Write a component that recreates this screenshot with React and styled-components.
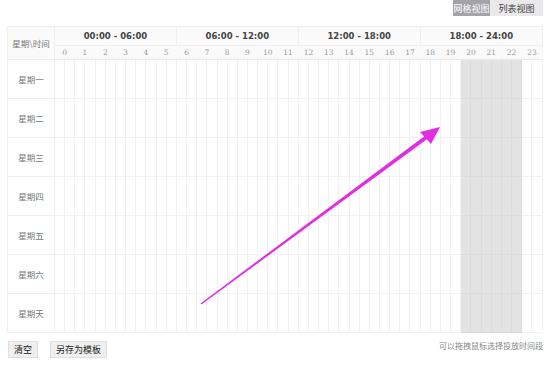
import React from 'react'
import styled, { createGlobalStyle } from 'styled-components'

const GlobalStyle = createGlobalStyle`
  body {
    margin: 0;
    background: #fff;
    font-family: 'Noto Sans CJK SC', 'DejaVu Sans', sans-serif;
  }
`

const Page = styled.div`
  position: relative;
  width: 550px;
  height: 366px;
  padding: 0 7px;
  box-sizing: border-box;
`

const Toolbar = styled.div`
  display: flex;
  justify-content: flex-end;
  height: 16px;
  margin-bottom: 10px;
`

const ViewButton = styled.div`
  display: flex;
  align-items: center;
  justify-content: center;
  width: ${(p) => (p.$active ? '37px' : '53px')};
  height: 16px;
  font-size: 9px;
  background: ${(p) => (p.$active ? '#a3a3a8' : '#e9e9e9')};
  color: ${(p) => (p.$active ? '#fff' : '#444')};
`

const Grid = styled.table`
  width: 536px;
  table-layout: fixed;
  border-collapse: collapse;
  border: 1px solid #ececec;

  td,
  th {
    border: 1px solid #efefef;
    padding: 0;
  }
`

const CornerCell = styled.th`
  width: 47px;
  font-size: 8.5px;
  font-weight: normal;
  color: #777;
  background: #fafafa;
`

const RangeCell = styled.th`
  height: 18px;
  font-family: 'DejaVu Sans', sans-serif;
  font-size: 8.5px;
  font-weight: bold;
  color: #444;
  background: #fafafa;
`

const HourCell = styled.th`
  height: 13px;
  font-family: 'DejaVu Serif', serif;
  font-size: 7.5px;
  font-weight: normal;
  color: #999;
  background: #fafafa;
  border-left-color: ${(p) => (p.$edge ? '#efefef' : '#fafafa')} !important;
  border-right-color: #fafafa !important;
  border-bottom-color: #e8e8e8 !important;
`

const DayCell = styled.td`
  height: 38px;
  font-size: 8.5px;
  color: #777;
  text-align: center;
`

const Slot = styled.td`
  background: ${(p) => (p.$on ? '#e3e3e3' : '#fff')};
  border-color: ${(p) => (p.$on ? '#dcdcdc' : '#f1f1f1')} !important;
`

const Footer = styled.div`
  display: flex;
  align-items: center;
  justify-content: space-between;
  margin-top: 8px;
  padding-left: 1px;
`

const Actions = styled.div`
  display: flex;
  gap: 12px;
`

const Button = styled.div`
  height: 15px;
  padding: 0 5px;
  display: flex;
  align-items: center;
  font-size: 9px;
  color: #222;
  background: #efefef;
  border: 1px solid #e0e0e0;
`

const Hint = styled.div`
  font-size: 8px;
  color: #888;
  margin-top: -8px;
`

const Arrow = styled.svg`
  position: absolute;
  left: 0;
  top: 0;
  pointer-events: none;
`

const ranges = ['00:00 - 06:00', '06:00 - 12:00', '12:00 - 18:00', '18:00 - 24:00']
const days = ['星期一', '星期二', '星期三', '星期四', '星期五', '星期六', '星期天']
const hours = Array.from({ length: 24 }, (_, i) => i)
const slots = Array.from({ length: 48 }, (_, i) => i)

const App = () => {
  return (
    <Page>
      <GlobalStyle />
      <Toolbar>
        <ViewButton $active>网格视图</ViewButton>
        <ViewButton>列表视图</ViewButton>
      </Toolbar>
      <Grid>
        <colgroup>
          <col style={{ width: 47 }} />
          {slots.map((s) => (
            <col key={s} />
          ))}
        </colgroup>
        <thead>
          <tr>
            <CornerCell rowSpan={2}>星期\时间</CornerCell>
            {ranges.map((r) => (
              <RangeCell key={r} colSpan={12}>
                {r}
              </RangeCell>
            ))}
          </tr>
          <tr>
            {hours.map((h) => (
              <HourCell key={h} colSpan={2} $edge={h === 0}>
                {h}
              </HourCell>
            ))}
          </tr>
        </thead>
        <tbody>
          {days.map((d) => (
            <tr key={d}>
              <DayCell>{d}</DayCell>
              {slots.map((s) => (
                <Slot key={s} $on={s >= 40 && s < 46} />
              ))}
            </tr>
          ))}
        </tbody>
      </Grid>
      <Footer>
        <Actions>
          <Button>清空</Button>
          <Button>另存为模板</Button>
        </Actions>
        <Hint>可以拖拽鼠标选择投放时间段</Hint>
      </Footer>
      <Arrow width="550" height="366" viewBox="0 0 550 366">
        <polygon points="200.5,303.5 201.5,304.5 428,138.5 426,135" fill="#e12ee0" />
        <polygon points="440,127 420,132 431,144" fill="#e12ee0" />
      </Arrow>
    </Page>
  )
}

export default App
